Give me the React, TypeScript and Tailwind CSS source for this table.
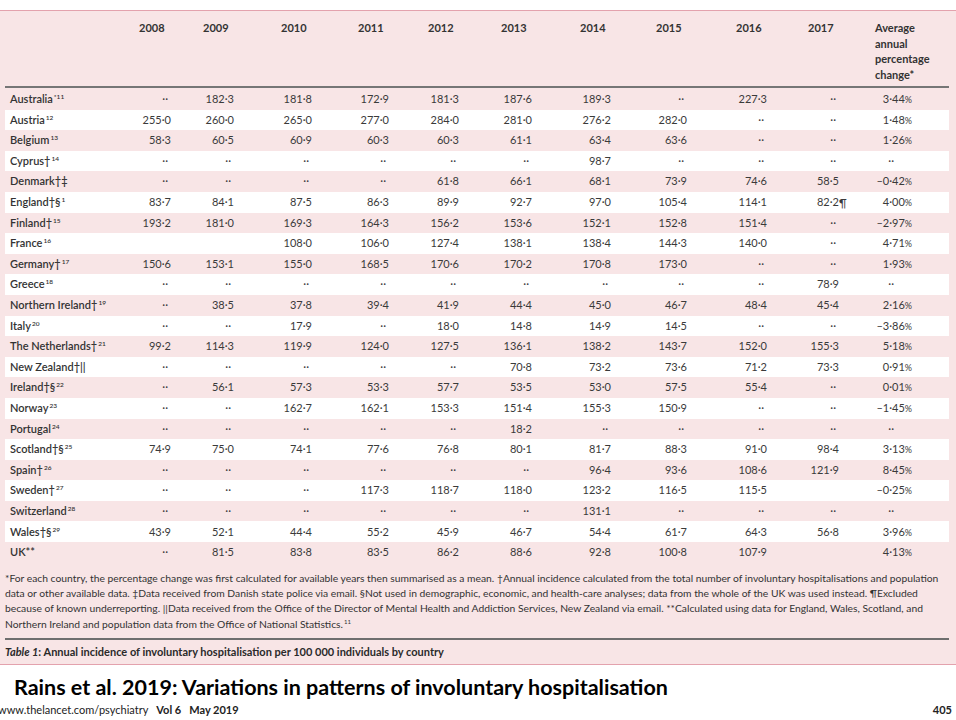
import React from "react";

type Row = { name: string; mark?: string; sup?: string; vals: string[]; avg: string };

const D = "··";
const rows: Row[] = [
  { name: "Australia", sup: "*11", vals: [D, "182·3", "181·8", "172·9", "181·3", "187·6", "189·3", D, "227·3", D], avg: "3·44" },
  { name: "Austria", sup: "12", vals: ["255·0", "260·0", "265·0", "277·0", "284·0", "281·0", "276·2", "282·0", D, D], avg: "1·48" },
  { name: "Belgium", sup: "13", vals: ["58·3", "60·5", "60·9", "60·3", "60·3", "61·1", "63·4", "63·6", D, D], avg: "1·26" },
  { name: "Cyprus", mark: "†", sup: "14", vals: [D, D, D, D, D, D, "98·7", D, D, D], avg: D },
  { name: "Denmark", mark: "†‡", vals: [D, D, D, D, "61·8", "66·1", "68·1", "73·9", "74·6", "58·5"], avg: "–0·42" },
  { name: "England", mark: "†§", sup: "1", vals: ["83·7", "84·1", "87·5", "86·3", "89·9", "92·7", "97·0", "105·4", "114·1", "82·2¶"], avg: "4·00" },
  { name: "Finland", mark: "†", sup: "15", vals: ["193·2", "181·0", "169·3", "164·3", "156·2", "153·6", "152·1", "152·8", "151·4", D], avg: "–2·97" },
  { name: "France", sup: "16", vals: ["", "", "108·0", "106·0", "127·4", "138·1", "138·4", "144·3", "140·0", D], avg: "4·71" },
  { name: "Germany", mark: "†", sup: "17", vals: ["150·6", "153·1", "155·0", "168·5", "170·6", "170·2", "170·8", "173·0", D, D], avg: "1·93" },
  { name: "Greece", sup: "18", vals: [D, D, D, D, D, D, D, D, D, "78·9"], avg: D },
  { name: "Northern Ireland", mark: "†", sup: "19", vals: [D, "38·5", "37·8", "39·4", "41·9", "44·4", "45·0", "46·7", "48·4", "45·4"], avg: "2·16" },
  { name: "Italy", sup: "20", vals: [D, D, "17·9", D, "18·0", "14·8", "14·9", "14·5", D, D], avg: "–3·86" },
  { name: "The Netherlands", mark: "†", sup: "21", vals: ["99·2", "114·3", "119·9", "124·0", "127·5", "136·1", "138·2", "143·7", "152·0", "155·3"], avg: "5·18" },
  { name: "New Zealand", mark: "†||", vals: [D, D, D, D, D, "70·8", "73·2", "73·6", "71·2", "73·3"], avg: "0·91" },
  { name: "Ireland", mark: "†§", sup: "22", vals: [D, "56·1", "57·3", "53·3", "57·7", "53·5", "53·0", "57·5", "55·4", D], avg: "0·01" },
  { name: "Norway", sup: "23", vals: [D, D, "162·7", "162·1", "153·3", "151·4", "155·3", "150·9", D, D], avg: "–1·45" },
  { name: "Portugal", sup: "24", vals: [D, D, D, D, D, "18·2", D, D, D, D], avg: D },
  { name: "Scotland", mark: "†§", sup: "25", vals: ["74·9", "75·0", "74·1", "77·6", "76·8", "80·1", "81·7", "88·3", "91·0", "98·4"], avg: "3·13" },
  { name: "Spain", mark: "†", sup: "26", vals: [D, D, D, D, D, D, "96·4", "93·6", "108·6", "121·9"], avg: "8·45" },
  { name: "Sweden", mark: "†", sup: "27", vals: [D, D, D, "117·3", "118·7", "118·0", "123·2", "116·5", "115·5", ""], avg: "–0·25" },
  { name: "Switzerland", sup: "28", vals: [D, D, D, D, D, D, "131·1", D, D, D], avg: D },
  { name: "Wales", mark: "†§", sup: "29", vals: ["43·9", "52·1", "44·4", "55·2", "45·9", "46·7", "54·4", "61·7", "64·3", "56·8"], avg: "3·96" },
  { name: "UK", mark: "**", vals: [D, "81·5", "83·8", "83·5", "86·2", "88·6", "92·8", "100·8", "107·9", ""], avg: "4·13" },
];

const years = ["2008", "2009", "2010", "2011", "2012", "2013", "2014", "2015", "2016", "2017"];
const colW = ["w-[64px]", "w-[78px]", "w-[77px]", "w-[70px]", "w-[73px]", "w-[79px]", "w-[76px]", "w-[80px]", "w-[72px]", "w-[67px]"];
const numW = ["w-[32px]", "w-[31px]", "w-[31px]", "w-[31px]", "w-[31px]", "w-[31px]", "w-[31px]", "w-[31px]", "w-[31px]", "w-[31px]"];

function Cell({ v, i }: { v: string; i: number }) {
  let content: React.ReactNode = null;
  if (v === D) {
    content = <span className="pr-[3px]">{D}</span>;
  } else if (v.endsWith("¶")) {
    content = (
      <span className="relative">
        {v.slice(0, -1)}
        <span className="absolute left-full top-0">¶</span>
      </span>
    );
  } else {
    content = v;
  }
  return (
    <div className={`${colW[i]} shrink-0`}>
      <div className={`${numW[i]} text-right whitespace-nowrap`}>{content}</div>
    </div>
  );
}

export default function App() {
  return (
    <div className="w-[956px] h-[720px] bg-white overflow-hidden text-[#3a3a3a]" style={{ fontFamily: "Lato, 'Open Sans', sans-serif" }}>
      <div className="h-[10px]" />
      <div className="bg-[#f8e5e6] border-t border-b border-[#e3a2ad]">
        <div className="ml-[5px] mr-[7px]">
          {/* header */}
          <div className="flex h-[75px] pt-[9px] text-[11px] leading-[15.6px] font-bold text-[#333]">
            <div className="w-[134px] shrink-0" />
            {years.map((y, i) => (
              <div key={y} className={`${colW[i]} shrink-0`}>{y}</div>
            ))}
            <div className="w-[74px] shrink-0">
              <div>Average</div>
              <div>annual</div>
              <div>percentage</div>
              <div>change*</div>
            </div>
          </div>
          <div className="h-[2px] bg-[#767676]" />
          {/* rows */}
          <div className="pt-[1px]">
            {rows.map((r, ri) => (
              <div key={r.name} className={`flex items-center h-[20.6px] text-[11px] ${ri % 2 === 1 ? "bg-white" : ""}`}>
                <div className="w-[134px] shrink-0 pl-[5px] font-semibold text-[#333] whitespace-nowrap">
                  {r.name}
                  {r.mark}
                  {r.sup && <span className="text-[6.5px] relative top-[-4px] ml-[1px]">{r.sup}</span>}
                </div>
                {r.vals.map((v, i) => (
                  <Cell key={i} v={v} i={i} />
                ))}
                <div className="w-[74px] shrink-0">
                  <div className="w-[37px] text-right whitespace-nowrap">
                    {r.avg === D ? (
                      <span className="pr-[18px]">{D}</span>
                    ) : (
                      <>
                        {r.avg}
                        <span className="text-[9px]">%</span>
                      </>
                    )}
                  </div>
                </div>
              </div>
            ))}
          </div>
          {/* footnotes */}
          <div className="pt-[8px] text-[10.3px] leading-[15.3px] text-[#333] whitespace-nowrap">
            <div>*For each country, the percentage change was first calculated for available years then summarised as a mean. †Annual incidence calculated from the total number of involuntary hospitalisations and population</div>
            <div>data or other available data. ‡Data received from Danish state police via email. §Not used in demographic, economic, and health-care analyses; data from the whole of the UK was used instead. ¶Excluded</div>
            <div>because of known underreporting. ||Data received from the Office of the Director of Mental Health and Addiction Services, New Zealand via email. **Calculated using data for England, Wales, Scotland, and</div>
            <div>
              Northern Ireland and population data from the Office of National Statistics.
              <span className="text-[6px] relative top-[-4px] ml-[1px]">11</span>
            </div>
          </div>
          <div className="h-[2px] bg-[#6e6e6e] mt-[5px]" />
          <div className="mt-[4px] pb-[5px] text-[11px] leading-[15px] font-bold text-[#2a2a2a] whitespace-nowrap">
            <span className="italic">Table 1</span>: Annual incidence of involuntary hospitalisation per 100 000 individuals by country
          </div>
        </div>
      </div>
      <div className="mt-[10px] pl-[14px] text-[21.5px] leading-[25px] font-bold text-black whitespace-nowrap">
        Rains et al. 2019: Variations in patterns of involuntary hospitalisation
      </div>
      <div className="mt-[3px] flex items-center text-[11px] leading-[14px] text-[#222] ml-[-2px] mr-[4px]">
        <span>www.thelancet.com/psychiatry</span>
        <span className="font-bold ml-[8px]">Vol 6</span>
        <span className="font-bold ml-[8px]">May 2019</span>
        <span className="ml-auto font-bold">405</span>
      </div>
    </div>
  );
}
